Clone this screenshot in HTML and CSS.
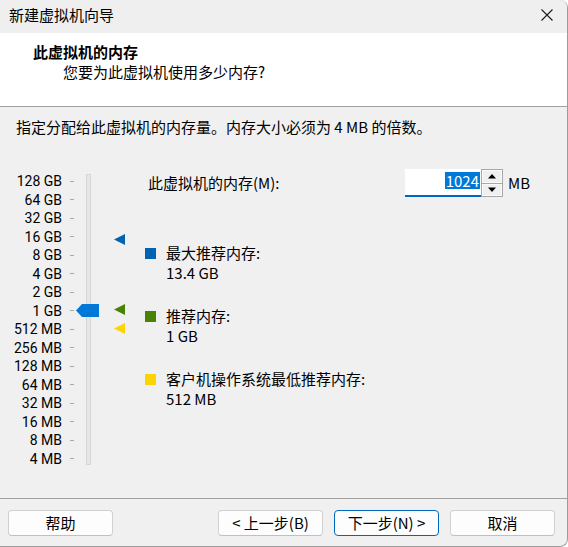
FILE: index.html
```html
<!DOCTYPE html>
<html lang="zh-CN">
<head>
<meta charset="utf-8">
<title>新建虚拟机向导</title>
<link rel="stylesheet" href="styles.css">
</head>
<body>
<div class="window">
  <div class="titlebar">
    <span class="title">新建虚拟机向导</span>
    <svg class="close" width="12" height="12" viewBox="0 0 12 12"><path d="M0.5 0.5 L11.5 11.5 M11.5 0.5 L0.5 11.5" stroke="#1a1a1a" stroke-width="1.1" fill="none"/></svg>
  </div>
  <div class="header">
    <div class="h-title">此虚拟机的内存</div>
    <div class="h-sub">您要为此虚拟机使用多少内存?</div>
  </div>
  <div class="main">
    <div class="instr">指定分配给此虚拟机的内存量。内存大小必须为 4 MB 的倍数。</div>
    <div class="content">
      <div class="slider">
        <div class="scale">
          <div class="row">128 GB</div>
          <div class="row">64 GB</div>
          <div class="row">32 GB</div>
          <div class="row">16 GB</div>
          <div class="row">8 GB</div>
          <div class="row">4 GB</div>
          <div class="row">2 GB</div>
          <div class="row">1 GB</div>
          <div class="row">512 MB</div>
          <div class="row">256 MB</div>
          <div class="row">128 MB</div>
          <div class="row">64 MB</div>
          <div class="row">32 MB</div>
          <div class="row">16 MB</div>
          <div class="row">8 MB</div>
          <div class="row">4 MB</div>
        </div>
        <div class="track"></div>
        <div class="markers">
          <svg class="mark mark-max" width="11" height="11" viewBox="0 0 11 11"><polygon points="0,5.5 11,0 11,11" fill="#0063b1"/></svg>
          <svg class="mark mark-rec" width="11" height="11" viewBox="0 0 11 11"><polygon points="0,5.5 11,0 11,11" fill="#498205"/></svg>
          <svg class="mark mark-min" width="11" height="11" viewBox="0 0 11 11"><polygon points="0,5.5 11,0 11,11" fill="#fcd500"/></svg>
        </div>
        <svg class="thumb" width="23" height="13" viewBox="0 0 23 13"><polygon points="0,6.5 6,0 23,0 23,13 6,13" fill="#0078d7"/></svg>
      </div>
      <div class="panel">
        <div class="mem-row">
          <span class="mem-label">此虚拟机的内存(M):</span>
          <div class="input"><span class="sel">1024</span></div>
          <div class="spin">
            <div class="spin-btn"><svg width="8" height="5" viewBox="0 0 8 5"><polygon points="4,0 8,4.5 0,4.5" fill="#000"/></svg></div>
            <div class="spin-btn"><svg width="8" height="5" viewBox="0 0 8 5"><polygon points="0,0.5 8,0.5 4,5" fill="#000"/></svg></div>
          </div>
          <span class="unit">MB</span>
        </div>
        <div class="legend">
          <div class="legend-item">
            <span class="sq sq-max"></span>
            <div class="legend-text"><div>最大推荐内存:</div><div>13.4 GB</div></div>
          </div>
          <div class="legend-item">
            <span class="sq sq-rec"></span>
            <div class="legend-text"><div>推荐内存:</div><div>1 GB</div></div>
          </div>
          <div class="legend-item">
            <span class="sq sq-min"></span>
            <div class="legend-text"><div>客户机操作系统最低推荐内存:</div><div>512 MB</div></div>
          </div>
        </div>
      </div>
    </div>
  </div>
  <div class="footer">
    <button class="btn btn-help">帮助</button>
    <button class="btn">&lt; 上一步(B)</button>
    <button class="btn btn-default">下一步(N) &gt;</button>
    <button class="btn">取消</button>
  </div>
</div>
</body>
</html>
```
FILE: styles.css
```css
html, body {
  margin: 0;
  padding: 0;
  background: #ffffff;
}
body {
  font-family: "Noto Sans CJK SC", "Noto Sans", sans-serif;
  font-size: 15px;
  line-height: 20px;
  color: #000;
}
.window {
  width: 568px;
  height: 547px;
  box-sizing: border-box;
  border-right: 1px solid #9c9c9c;
  border-bottom: 1px solid #9c9c9c;
  border-top-right-radius: 8px;
  border-bottom-right-radius: 8px;
  overflow: hidden;
  display: flex;
  flex-direction: column;
  background: #f0f0f0;
}
.titlebar {
  height: 33px;
  box-sizing: border-box;
  padding: 0 14px 3px 9px;
  display: flex;
  align-items: center;
  justify-content: space-between;
  background: #efefef;
  flex-shrink: 0;
}
.close { display: block; }
.header {
  height: 74px;
  box-sizing: border-box;
  background: #fff;
  border-bottom: 1px solid #a0a0a0;
  padding: 9px 0 0 33px;
  flex-shrink: 0;
}
.h-title { font-weight: bold; }
.h-sub { padding-left: 30px; }
.main {
  flex: 1;
  padding-top: 10px;
  box-sizing: border-box;
}
.instr { padding-left: 16px; }
.content {
  margin-top: 32px;
  display: flex;
  align-items: flex-start;
}
.slider {
  position: relative;
  margin-top: 3px;
  display: flex;
  align-items: flex-start;
  height: 296px;
}
.scale {
  width: 74px;
  height: 296px;
  display: flex;
  flex-direction: column;
  justify-content: space-between;
  font-family: Roboto, "Noto Sans", sans-serif;
  font-size: 14px;
}
.row {
  height: 18px;
  line-height: 18px;
  display: flex;
  align-items: center;
  justify-content: flex-end;
  white-space: nowrap;
}
.row::after {
  content: "";
  width: 4px;
  height: 1px;
  margin-left: 8px;
  background: #a8a8a8;
}
.track {
  margin-left: 12px;
  margin-top: 2px;
  width: 5px;
  height: 291px;
  box-sizing: border-box;
  border: 1px solid #d6d6d6;
  background: #e6e6e6;
}
.markers {
  position: relative;
  margin-left: 23px;
  width: 11px;
  height: 296px;
}
.mark { position: absolute; left: 0; display: block; }
.mark-max { top: 62px; }
.mark-rec { top: 132px; }
.mark-min { top: 151px; }
.thumb {
  position: absolute;
  left: 76px;
  top: 132px;
  display: block;
}
.panel {
  margin-left: 20px;
}
.mem-row {
  display: flex;
  align-items: center;
  height: 28px;
}
.mem-label {
  width: 260px;
  box-sizing: border-box;
  padding-left: 3px;
  white-space: nowrap;
}
.input {
  width: 76px;
  height: 28px;
  box-sizing: border-box;
  background: #fff;
  border-bottom: 2px solid #0067c0;
  display: flex;
  justify-content: flex-end;
  align-items: flex-start;
  padding: 3px 1px 0 0;
}
.sel {
  background: #0078d7;
  color: #fff;
  line-height: 17px;
  padding: 0 1px;
}
.spin {
  width: 22px;
  height: 28px;
  display: flex;
  flex-direction: column;
}
.spin-btn {
  flex: 1;
  box-sizing: border-box;
  border: 1px solid #a8a8a8;
  background: #f0f0f0;
  box-shadow: inset 0 0 0 1px #fafafa;
  display: flex;
  align-items: center;
  justify-content: center;
}
.spin-btn + .spin-btn { border-top: none; }
.spin-btn svg { display: block; }
.unit { margin-left: 5px; }
.legend { margin-top: 46px; }
.legend-item {
  display: flex;
  align-items: flex-start;
  margin-bottom: 23px;
}
.sq {
  width: 11px;
  height: 11px;
  margin-top: 5px;
  margin-right: 10px;
  flex-shrink: 0;
}
.sq-max { background: #0063b1; }
.sq-rec { background: #498205; }
.sq-min { background: #fcd500; }
.legend-text { white-space: nowrap; }
.footer {
  height: 48px;
  box-sizing: border-box;
  border-top: 1px solid #a0a0a0;
  padding: 11px 12px 0 8px;
  display: flex;
  align-items: flex-start;
  flex-shrink: 0;
}
.btn {
  width: 105px;
  height: 26px;
  box-sizing: border-box;
  border: 1px solid #d0d0d0;
  border-bottom-color: #c0c0c0;
  border-radius: 4px;
  background: #fdfdfd;
  font-family: "Noto Sans CJK SC", "Noto Sans", sans-serif;
  font-size: 15px;
  line-height: 22px;
  color: #000;
  padding: 0;
  margin-left: 11px;
  text-align: center;
}
.btn-help { margin-left: 0; margin-right: auto; }
.btn-default { border-color: #0067c0; }
```
